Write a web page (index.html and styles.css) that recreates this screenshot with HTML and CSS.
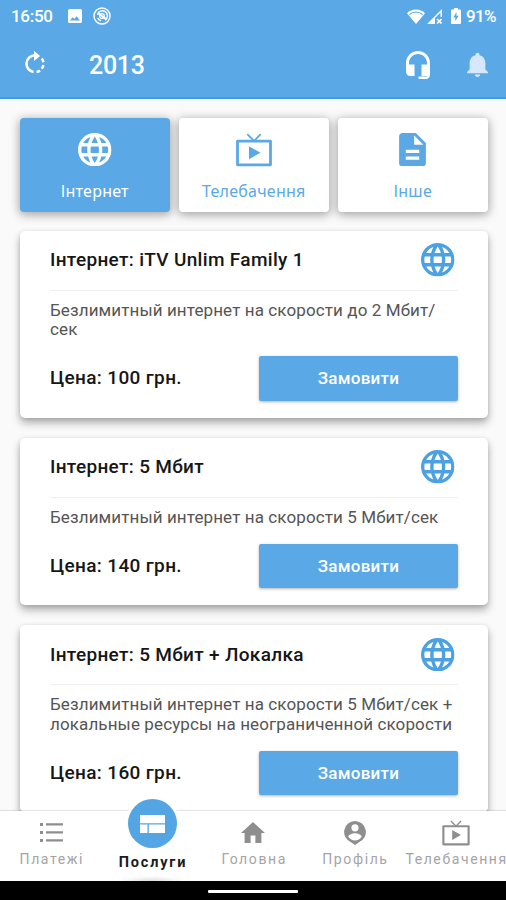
FILE: index.html
```html
<!DOCTYPE html>
<html lang="uk">
<head>
<meta charset="utf-8">
<title>Послуги</title>
<link rel="stylesheet" href="styles.css">
</head>
<body>
<svg class="sprite" aria-hidden="true">
  <symbol id="globe" viewBox="2 2 20 20"><path d="M11.99 2C6.47 2 2 6.48 2 12s4.47 10 9.99 10C17.52 22 22 17.52 22 12S17.52 2 11.99 2zm6.93 6h-2.95c-.32-1.25-.78-2.45-1.38-3.56 1.84.63 3.37 1.91 4.33 3.56zM12 4.04c.83 1.2 1.48 2.53 1.91 3.96h-3.82c.43-1.43 1.08-2.76 1.91-3.96zM4.26 14C4.1 13.36 4 12.69 4 12s.1-1.36.26-2h3.38c-.08.66-.14 1.32-.14 2s.06 1.34.14 2H4.26zm.82 2h2.95c.32 1.25.78 2.45 1.38 3.56-1.84-.63-3.37-1.9-4.33-3.56zm2.95-8H5.08c.96-1.66 2.49-2.93 4.33-3.56C8.81 5.55 8.35 6.75 8.03 8zM12 19.96c-.83-1.2-1.48-2.53-1.91-3.96h3.82c-.43 1.43-1.08 2.76-1.91 3.96zM14.34 14H9.66c-.09-.66-.16-1.32-.16-2s.07-1.35.16-2h4.68c.09.65.16 1.32.16 2s-.07 1.34-.16 2zm.25 5.56c.6-1.11 1.06-2.31 1.38-3.56h2.95c-.96 1.65-2.49 2.93-4.33 3.56zM16.36 14c.08-.66.14-1.32.14-2s-.06-1.34-.14-2h3.38c.16.64.26 1.31.26 2s-.1 1.36-.26 2h-3.38z"/></symbol>
  <symbol id="tv" viewBox="0 0 36 34"><path fill="none" stroke="currentColor" stroke-width="2.8" stroke-linejoin="round" d="M1.5 8.2h33v23.6h-33z"/><path fill="none" stroke="currentColor" stroke-width="1.8" d="M11.3 1.2 18 8l6.7-6.8"/><path d="M13 13.2v13L24.500 19.700z"/></symbol>
  <symbol id="doc" viewBox="4 2 16 20"><path d="M14 2H6c-1.100 0-1.990.9-1.990 2L4 20c0 1.100.89 2 1.990 2H18c1.100 0 2-.9 2-2V8l-6-6zm2 16H8v-2h8v2zm0-4H8v-2h8v2zm-3-5V3.500L18.500 9H13z"/></symbol>
</svg>
<div class="screen">
  <header class="header">
    <div class="status">
      <span class="time">16:50</span>
      <svg class="s-photo" viewBox="0 0 14 14"><path fill-rule="evenodd" d="M1.500 0h11A1.500 1.500 0 0 1 14 1.500v11a1.500 1.500 0 0 1-1.500 1.500h-11A1.500 1.500 0 0 1 0 12.500v-11A1.500 1.500 0 0 1 1.500 0zM2 11.500h10L8.700 7.200 6.300 10 4.600 8.200z"/></svg>
      <svg class="s-round" viewBox="0 0 18 18"><g fill="none" stroke="currentColor"><circle cx="9" cy="9" r="8" stroke-width="1.500"/><path stroke-width="1.500" d="M4.500 8a5 5 0 1 1 7.500 5M4.700 11a5 5 0 0 0 3.300 2.800"/><path stroke-width="2" d="M5.500 6.500l7 5.300"/><circle cx="9" cy="9" r="2.300" stroke-width="1.300"/></g></svg>
      <span class="grow"></span>
      <svg class="s-wifi" viewBox="0 0 18 15"><path d="M0 4.200a13 13 0 0 1 18 0L9 15z"/><path fill="none" stroke="#5aa9e6" stroke-width="1.200" d="M2.300 5.600a10 10 0 0 1 13.400 0"/></svg>
      <svg class="s-cell" viewBox="0 0 15 15"><path fill-rule="evenodd" d="M0 15 15 0v8h-1.500V3.600L8 9v6z"/><path fill="none" stroke="currentColor" stroke-width="1.600" d="M10 10l4.500 4.500M14.500 10 10 14.500"/></svg>
      <svg class="s-batt" viewBox="0 0 10 16"><path fill-rule="evenodd" d="M3 0h4v1.500h2a1 1 0 0 1 1 1V15a1 1 0 0 1-1 1H1a1 1 0 0 1-1-1V2.500a1 1 0 0 1 1-1h2zM5.500 4 2.300 9.500h2V13L7.700 7.700h-2.200z"/></svg>
      <span class="percent">91%</span>
    </div>
    <div class="toolbar">
      <svg class="t-refresh" viewBox="0 0 20 23"><g fill="none" stroke="currentColor" stroke-width="2.500"><path d="M10 4.300A8.400 8.400 0 0 0 8.600 21"/><path d="M11.500 21a8.400 8.400 0 0 0 3.600-1.600M16.800 17.700a8.400 8.400 0 0 0 1.600-3.600M18.400 11.300a8.400 8.400 0 0 0-1.600-3.700"/></g><path d="M9 0l6.200 5L9 10z"/></svg>
      <h1 class="title">2013</h1>
      <svg class="t-head" viewBox="0 0 24 28"><path d="M12 0C5.400 0 0 5.400 0 12v9c0 2.200 1.700 4 4 4h4.500V13.500H3V12c0-5 4-9 9-9s9 4 9 9v1.500h-5.500V25H21v.6h-7.500a1.200 1.200 0 0 0 0 2.400H20c2.200 0 4-1.800 4-4V12C24 5.400 18.600 0 12 0z"/></svg>
      <svg class="t-bell" viewBox="4 2 16 20" preserveAspectRatio="none"><path d="M12 22c1.100 0 2-.9 2-2h-4c0 1.100.89 2 2 2zm6-6v-5c0-3.070-1.640-5.640-4.500-6.320V4c0-.83-.67-1.500-1.500-1.500s-1.500.67-1.500 1.500v.68C7.630 5.360 6 7.920 6 11v5l-2 2v1h16v-1l-2-2z"/></svg>
    </div>
  </header>
  <main class="content">
    <nav class="tabs">
      <a class="tab active"><svg class="i-globe"><use href="#globe"/></svg><span>Інтернет</span></a>
      <a class="tab"><svg class="i-tv"><use href="#tv"/></svg><span>Телебачення</span></a>
      <a class="tab"><svg class="i-doc"><use href="#doc"/></svg><span>Інше</span></a>
    </nav>
    <section class="card">
      <div class="head"><h2>Інтернет: iTV Unlim Family 1</h2><svg class="i-globe"><use href="#globe"/></svg></div>
      <p class="desc">Безлимитный интернет на скорости до 2 Мбит/<br>сек</p>
      <div class="foot"><span class="price">Цена: 100 грн.</span><button class="order">Замовити</button></div>
    </section>
    <section class="card">
      <div class="head"><h2>Інтернет: 5 Мбит</h2><svg class="i-globe"><use href="#globe"/></svg></div>
      <p class="desc">Безлимитный интернет на скорости 5 Мбит/сек</p>
      <div class="foot"><span class="price">Цена: 140 грн.</span><button class="order">Замовити</button></div>
    </section>
    <section class="card">
      <div class="head"><h2>Інтернет: 5 Мбит + Локалка</h2><svg class="i-globe"><use href="#globe"/></svg></div>
      <p class="desc">Безлимитный интернет на скорости 5 Мбит/сек +<br>локальные ресурсы на неограниченной скорости</p>
      <div class="foot"><span class="price">Цена: 160 грн.</span><button class="order">Замовити</button></div>
    </section>
  </main>
  <nav class="bottom">
    <a class="item"><svg class="b-list" viewBox="0 0 23 19"><path d="M0 0h3v3H0zM6 .3h17v2.200H6zM0 8h3v3H0zM6 8.300h17v2.200H6zM0 16h3v3H0zM6 16.300h17v2.200H6z"/></svg><span>Платежі</span></a>
    <a class="item current"><i class="bubble"><svg viewBox="0 0 25 18"><path d="M0 0h25v8.300H0zM0 9.500h7.500V18H0zM8.800 9.500H25V18H8.800z"/></svg></i><span>Послуги</span></a>
    <a class="item"><svg class="b-home" viewBox="2 3 20 17" preserveAspectRatio="none"><path d="M10 20v-6h4v6h5v-8h3L12 3 2 12h3v8z"/></svg><span>Головна</span></a>
    <a class="item"><svg class="b-user" viewBox="0 0 22 24"><path fill-rule="evenodd" d="M11 0a11 11 0 0 1 4 21.200L11 24l-4-2.800A11 11 0 0 1 11 0zm0 3.200a3.600 3.600 0 1 0 0 7.200 3.600 3.600 0 0 0 0-7.200zM4.300 15.800a8 8 0 0 0 13.400 0c0-2.200-4.400-3.500-6.700-3.500s-6.700 1.300-6.700 3.500z"/></svg><span>Профіль</span></a>
    <a class="item"><svg class="b-tv"><use href="#tv"/></svg><span>Телебачення</span></a>
  </nav>
  <div class="system"><i class="pill"></i></div>
</div>
</body>
</html>
```
FILE: styles.css
```css
* { box-sizing: border-box; margin: 0; padding: 0; }
body { width: 506px; height: 900px; overflow: hidden; font-family: Roboto, "Noto Sans", sans-serif; background: #fafafa; }
svg { display: block; flex: none; fill: currentColor; }
.sprite { position: absolute; width: 0; height: 0; }
.screen { height: 900px; display: flex; flex-direction: column; }
.header { height: 99px; flex: none; background: #5aa9e6; border-bottom: 2px solid #3d9ce6; color: #fff; }
.status { height: 32px; display: flex; align-items: center; padding: 0 9px 0 11px; }
.time, .percent { font-weight: 500; font-size: 17px; line-height: 32px; }
.time { width: 57px; letter-spacing: -.3px; }
.s-photo { width: 14px; height: 14px; }
.s-round { width: 18px; height: 18px; margin-left: 11px; }
.grow { flex: 1; }
.s-wifi { width: 18px; height: 15px; margin-right: 2px; }
.s-cell { width: 15px; height: 15px; margin-right: 9px; }
.s-batt { width: 10px; height: 16px; margin-right: 5px; }
.percent { width: 31px; white-space: nowrap; letter-spacing: -.6px; }
.toolbar { height: 65px; display: flex; align-items: center; padding: 0 18px 0 25px; }
.t-refresh { width: 20px; height: 23px; margin-top: -4px; }
.title { margin: 2px 0 0 44px; flex: 1; font-weight: 500; font-size: 25px; line-height: 30px; letter-spacing: -.3px; }
.t-head { width: 24px; height: 28px; margin-right: 37px; }
.t-bell { width: 21px; height: 25px; color: #d6e8ff; }
.content { flex: 1; min-height: 0; overflow: hidden; padding: 19px 18.500px 0 20px; }
.tabs { display: grid; grid-template-columns: repeat(3, 1fr); gap: 9.500px; }
.tab { height: 94px; display: flex; flex-direction: column; align-items: center; justify-content: space-between; padding: 14.500px 0 9px; border-radius: 4px; background: #fff; color: #5aa9e6; box-shadow: 0 2px 10px 1px rgba(0, 0, 0, .34); font: 16px/24px "Noto Sans", sans-serif; letter-spacing: .25px; }
.tab.active { background: #5aa9e6; color: #fff; }
.i-globe { width: 33.500px; height: 33.500px; }
.i-tv { width: 36px; height: 34px; }
.i-doc { width: 27px; height: 33.500px; }
.card { margin-top: 20px; padding: 0 30px 17px; border-radius: 5px; background: #fff; box-shadow: 0 5px 9px rgba(0, 0, 0, .3), 0 1px 4px rgba(0, 0, 0, .12); }
.tabs + .card { margin-top: 18.600px; }
.head { height: 60px; display: flex; align-items: center; justify-content: space-between; border-bottom: 1px solid #efefef; padding-right: 3px; }
.head .i-globe { color: #4ba1e2; }
.card h2, .price { font-weight: 500; font-size: 19px; line-height: 24px; color: #161616; white-space: nowrap; letter-spacing: .32px; }
.price { letter-spacing: .35px; }
.desc { padding: 10px 0 16.500px; font-size: 17px; line-height: 19.500px; color: #555; white-space: nowrap; letter-spacing: .11px; }
.foot { display: flex; align-items: center; justify-content: space-between; }
.order { width: 199px; height: 44.500px; margin-right: -.500px; border: 0; border-radius: 2px; background: #5aa9e6; color: #fff; font: 500 17px/44px Roboto, sans-serif; letter-spacing: .25px; box-shadow: 0 1px 3px rgba(0, 0, 0, .3); }
.bottom { position: relative; z-index: 1; height: 70px; flex: none; display: grid; grid-template: 70px / repeat(5, 101.200px); background: #fff; box-shadow: 0 -1px 1px rgba(0, 0, 0, .1); }
.item { min-width: 0; display: flex; flex-direction: column; align-items: center; justify-content: flex-end; padding: 0 0 12px 1px; color: #8e8e8e; }
.item span { margin-right: -1.500px; font-size: 14px; line-height: 20px; letter-spacing: 1.600px; color: #a4a4a4; white-space: nowrap; }
.b-list { width: 23px; height: 19px; margin-bottom: 7px; }
.b-home { width: 24px; height: 21px; margin-bottom: 6px; }
.b-user { width: 22px; height: 24px; margin-bottom: 4px; }
.b-tv { width: 28px; height: 26px; margin-bottom: 3px; }
.current { padding-bottom: 8px; background: radial-gradient(ellipse 32px 5px at 50% 100%, #dedede, transparent); }
.item.current span { font-weight: 700; font-size: 14.500px; letter-spacing: 1.800px; color: #1c1c1c; }
.bubble { flex: none; width: 49px; height: 49px; margin-bottom: 5px; display: grid; place-items: center; border-radius: 50%; background: #54a5e3; color: #fff; box-shadow: 0 0 0 3px #fff; }
.bubble svg { width: 25px; height: 18px; }
.system { height: 19px; flex: none; display: flex; justify-content: center; padding-top: 9px; background: #000; }
.pill { width: 90px; height: 3px; border-radius: 1px; background: #fff; }
```
